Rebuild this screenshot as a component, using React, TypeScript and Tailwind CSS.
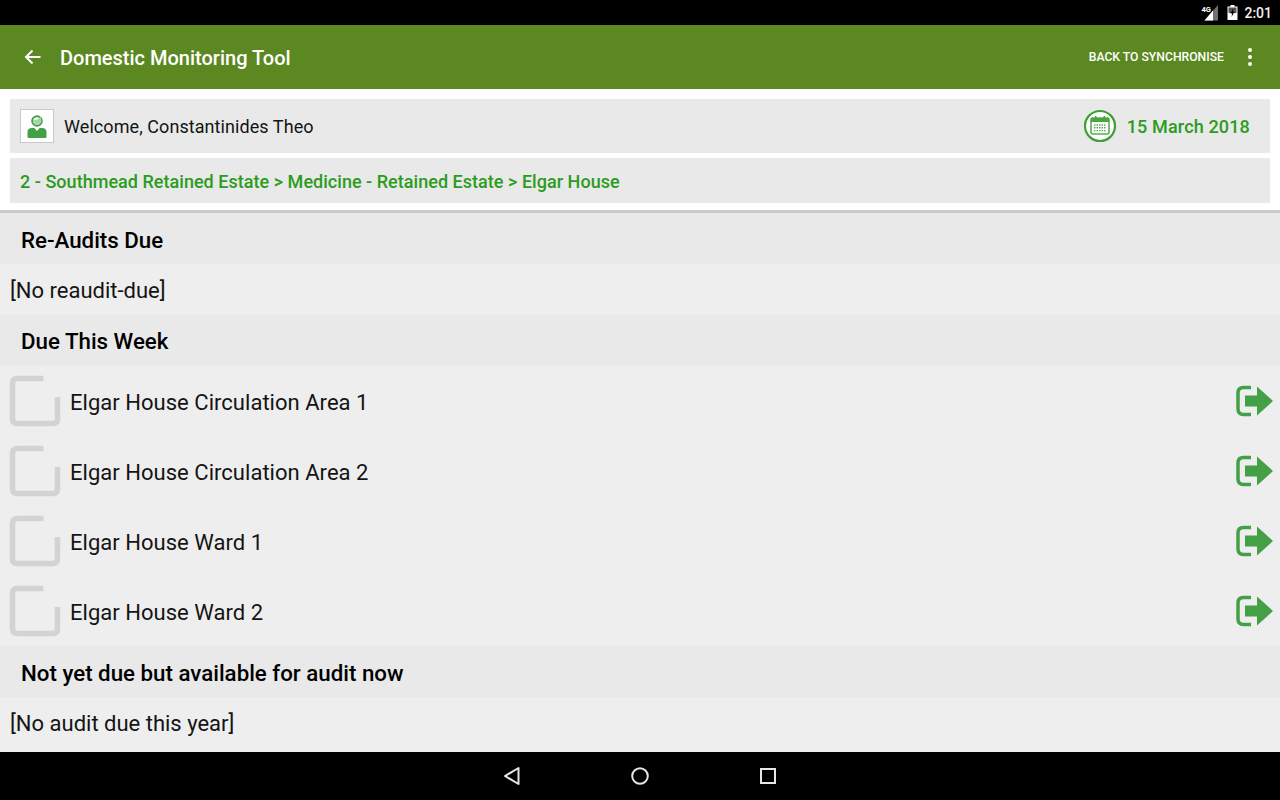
import React from "react";

const font = { fontFamily: "Roboto, sans-serif" };

function ExitIcon() {
  return (
    <svg width="40" height="34" viewBox="0 0 40 34" className="block">
      <path d="M16 3.500H8.500Q3 3.500 3 9V25Q3 30.500 8.500 30.500H16" fill="none" stroke="#43a047" strokeWidth="3.500" />
      <path d="M10 11.500H22V2.500L38 17L22 31.500V22.500H10Z" fill="#43a047" />
    </svg>
  );
}

function Checkbox() {
  return (
    <svg width="52" height="52" viewBox="0 0 52 52" className="block shrink-0">
      <path d="M34.500 3.500H8Q3.500 3.500 3.500 8V44Q3.500 48.500 8 48.500H44Q48.500 48.500 48.500 44V22" fill="none" stroke="#d3d3d3" strokeWidth="5.500" />
    </svg>
  );
}

function SectionHeader({ children, className }: { children: React.ReactNode; className: string }) {
  return (
    <div className={`flex shrink-0 items-center bg-[#e9e9e9] pl-[21px] text-[22.300px] font-medium text-black ${className}`}>
      {children}
    </div>
  );
}

function AuditRow({ name }: { name: string }) {
  return (
    <div className="flex h-[70px] items-center pl-[9px] pr-[5px]">
      <Checkbox />
      <span className="ml-[9px] flex-1 pt-[2px] text-[22px] tracking-[0.03px] text-[#141414]">{name}</span>
      <ExitIcon />
    </div>
  );
}

export default function App() {
  return (
    <div style={font} className="flex h-[800px] w-[1280px] flex-col overflow-hidden bg-[#eeeeee]">
      {/* Status bar */}
      <div className="flex h-[25px] shrink-0 items-center justify-end bg-black pr-[8px] text-white">
        <svg width="20" height="17" viewBox="0 0 20 17" className="mr-[8px]">
          <path d="M19 1V16.500H5.500Z" fill="#707070" />
          <path d="M14 6.500V16.500H5.500Z" fill="#fff" />
          <text x="2.500" y="7.500" fontSize="7.500" fontWeight="700" fill="#fff" style={font}>4G</text>
        </svg>
        <svg width="11" height="15" viewBox="0 0 11 15" className="mr-[6px]">
          <path d="M3.500 0H7.500V1.500H10.500V15H.5V1.500H3.500Z" fill="#fff" />
          <path d="M1.500 2.500H9.500V8H1.500Z" fill="#555" />
          <path d="M6.500 3L3.500 8.500H5.200L4.500 12L7.500 6.800H5.800Z" fill="#000" />
        </svg>
        <span className="text-[14px] font-medium leading-none text-[#f0f0f0]">2:01</span>
      </div>

      {/* App bar */}
      <div className="flex h-[64px] shrink-0 items-center bg-[#5b8820] text-white">
        <svg width="18" height="16" viewBox="0 0 18 16" className="ml-[24px] -mt-[1px]">
          <path d="M16.500 8H2M8.500 1.500L2 8L8.500 14.500" fill="none" stroke="#fff" strokeWidth="2" />
        </svg>
        <span className="ml-[18px] pt-[1px] text-[20px] font-medium">Domestic Monitoring Tool</span>
        <span className="ml-auto text-[12.200px] font-medium">BACK TO SYNCHRONISE</span>
        <div className="ml-[24px] mr-[28px] flex flex-col gap-[3px]">
          <span className="h-[4px] w-[4px] rounded-full bg-white" />
          <span className="h-[4px] w-[4px] rounded-full bg-white" />
          <span className="h-[4px] w-[4px] rounded-full bg-white" />
        </div>
      </div>

      {/* Info panel */}
      <div className="flex h-[124px] shrink-0 flex-col gap-[5px] border-b-[3px] border-[#c9c9c9] bg-white px-[10px] pt-[10px]">
        <div className="flex h-[54px] items-center bg-[#e9e9e9] pl-[10px] pr-[20px]">
          <div className="flex h-[34px] w-[34px] items-center justify-center border border-[#c9c9c9] bg-white">
            <svg width="20" height="27" viewBox="0 0 20 27">
              <circle cx="10" cy="8" r="4.800" fill="none" stroke="#43a047" strokeWidth="2" />
              <path d="M6 7Q11 7.500 13.500 3.500L14.500 8Q13 12 10 12Q7 12 6 7Z" fill="#a5d6a7" />
              <path d="M0.500 24V19Q0.500 15 5 15H7.500L10 18L12.500 15H15Q19.500 15 19.500 19V24Q19.500 25 18 25H2Q0.500 25 0.500 24Z" fill="#43a047" />
            </svg>
          </div>
          <span className="ml-[10px] text-[18px] tracking-[0.07px] text-[#141414]">Welcome, Constantinides Theo</span>
          <svg width="34" height="34" viewBox="0 0 34 34" className="ml-auto">
            <circle cx="17" cy="17" r="15" fill="#fff" stroke="#3f9f35" strokeWidth="2.200" />
            <rect x="8" y="9" width="18" height="16" rx="1.500" fill="none" stroke="#5aad50" strokeWidth="1.600" />
            <path d="M8 9H26V13H8ZM12 7H13.500V10H12ZM20.500 7H22V10H20.500Z" fill="#4aa540" />
            <path d="M11 16H23M11 18.800H23M11 21.600H23" stroke="#5aad50" strokeWidth="1.400" strokeDasharray="1.500 1" />
          </svg>
          <span className="ml-[10px] text-[18px] font-medium tracking-[0.15px] text-[#2b9c20]">15 March 2018</span>
        </div>
        <div className="flex h-[45px] items-center bg-[#e9e9e9] pl-[10px] pt-[2px] text-[18px] font-medium tracking-[0.03px] text-[#2b9c20]">
          2 - Southmead Retained Estate &gt; Medicine - Retained Estate &gt; Elgar House
        </div>
      </div>

      {/* Content */}
      <SectionHeader className="h-[51px] pt-[5px]">Re-Audits Due</SectionHeader>
      <div className="flex h-[51px] shrink-0 items-center pl-[10px] pt-[1px] text-[22px] text-[#141414]">[No reaudit-due]</div>
      <SectionHeader className="h-[51px] pt-[2px]">Due This Week</SectionHeader>
      <div className="shrink-0">
        <AuditRow name="Elgar House Circulation Area 1" />
        <AuditRow name="Elgar House Circulation Area 2" />
        <AuditRow name="Elgar House Ward 1" />
        <AuditRow name="Elgar House Ward 2" />
      </div>
      <SectionHeader className="h-[51px] pt-[4px]">Not yet due but available for audit now</SectionHeader>
      <div className="flex h-[55px] shrink-0 items-center pb-[3px] pl-[10px] text-[22px] text-[#141414]">[No audit due this year]</div>

      {/* Navigation bar */}
      <div className="relative flex h-[48px] shrink-0 items-center justify-center gap-[106px] bg-black">
        <svg width="22" height="22" viewBox="0 0 22 22">
          <path d="M17.500 3V19L4 11Z" fill="none" stroke="#e6e6e6" strokeWidth="2" strokeLinejoin="round" />
        </svg>
        <svg width="22" height="22" viewBox="0 0 22 22">
          <circle cx="11" cy="11" r="7.800" fill="none" stroke="#e6e6e6" strokeWidth="2" />
        </svg>
        <svg width="22" height="22" viewBox="0 0 22 22">
          <rect x="4" y="4" width="14" height="14" fill="none" stroke="#e6e6e6" strokeWidth="2" />
        </svg>
      </div>
    </div>
  );
}
